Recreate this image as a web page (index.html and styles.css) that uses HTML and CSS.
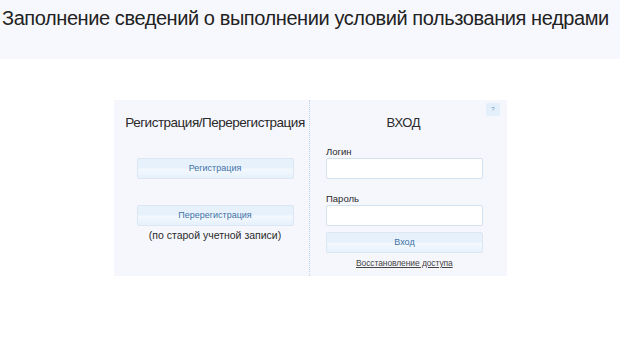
FILE: index.html
```html
<!DOCTYPE html>
<html lang="ru">
<head>
<meta charset="utf-8">
<link rel="stylesheet" href="styles.css">
</head>
<body>
<header class="top">
  <h1 class="title">Заполнение сведений о выполнении условий пользования недрами</h1>
</header>
<main class="wrap">
  <section class="card">
    <div class="col col-left">
      <h2 class="col-title">Регистрация/Перерегистрация</h2>
      <button class="btn btn-reg">Регистрация</button>
      <button class="btn btn-rereg">Перерегистрация</button>
      <div class="note">(по старой учетной записи)</div>
    </div>
    <div class="col col-right">
      <button class="help">?</button>
      <h2 class="col-title login-title">ВХОД</h2>
      <label class="lbl">Логин</label>
      <input class="inp" type="text">
      <label class="lbl lbl-pass">Пароль</label>
      <input class="inp" type="password">
      <button class="btn btn-login">Вход</button>
      <a class="restore" href="#">Восстановление доступа</a>
    </div>
  </section>
</main>
</body>
</html>
```
FILE: styles.css
```css
html, body {
  margin: 0;
  padding: 0;
  background: #ffffff;
  font-family: "Liberation Sans", Arial, sans-serif;
  color: #333;
}
.top {
  height: 59px;
  background: #f7f8fd;
}
.title {
  margin: 0;
  padding: 5px 0 0 2px;
  font-size: 20px;
  font-weight: normal;
  line-height: 26px;
  letter-spacing: -0.42px;
  color: #222;
  white-space: nowrap;
}
.wrap {
  display: flex;
  justify-content: flex-start;
  padding: 41px 0 0 114px;
}
.card {
  width: 393px;
  height: 176px;
  background: #f6f7fd;
  display: flex;
}
.col {
  display: flex;
  flex-direction: column;
  box-sizing: border-box;
}
.col-left {
  width: 196px;
  padding-left: 7px;
  align-items: center;
  border-right: 1px dotted #b9d4ee;
}
.col-right {
  flex: 1;
  position: relative;
  align-items: flex-start;
  padding-left: 16px;
}
.col-title {
  margin: 14px 0 0;
  font-size: 13.5px;
  font-weight: normal;
  line-height: 17px;
  letter-spacing: -0.5px;
  color: #2a2a2a;
  white-space: nowrap;
}
.login-title {
  align-self: center;
  margin-left: -26px;
  font-size: 13px;
  letter-spacing: -0.3px;
}
.btn {
  width: 157px;
  height: 21px;
  padding: 0;
  border: 1px solid #dbe7f3;
  border-radius: 2px;
  background: linear-gradient(to bottom, #e6f1fc 0%, #e6f1fc 45%, #f3f8fd 55%, #e6f1fc 100%);
  color: #3f72a8;
  font-family: "Liberation Sans", Arial, sans-serif;
  font-size: 9px;
  line-height: 19px;
  box-sizing: border-box;
}
.btn-reg { margin-top: 27px; }
.btn-rereg { margin-top: 26px; }
.note {
  margin-top: 3px;
  font-size: 10.5px;
  line-height: 13px;
  color: #2a2a2a;
}
.help {
  position: absolute;
  top: 3px;
  right: 7px;
  width: 14px;
  height: 13px;
  padding: 0;
  border: none;
  border-radius: 2px;
  background: #e3effb;
  color: #6f93bb;
  font-size: 6px;
  line-height: 13px;
  font-family: "Liberation Sans", Arial, sans-serif;
}
.lbl {
  margin: 15px 0 0;
  font-size: 9.5px;
  line-height: 12px;
  color: #2a2a2a;
}
.lbl-pass { margin-top: 14px; }
.inp {
  width: 157px;
  height: 21px;
  margin-top: 0;
  border: 1px solid #d4e1ee;
  border-radius: 2px;
  background: #fff;
  box-sizing: border-box;
}
.btn-login { margin-top: 6px; }
.restore {
  align-self: flex-start;
  margin: 5px 0 0 30px;
  font-size: 8.5px;
  line-height: 11px;
  letter-spacing: -0.1px;
  color: #444;
  text-decoration: underline;
}
```
